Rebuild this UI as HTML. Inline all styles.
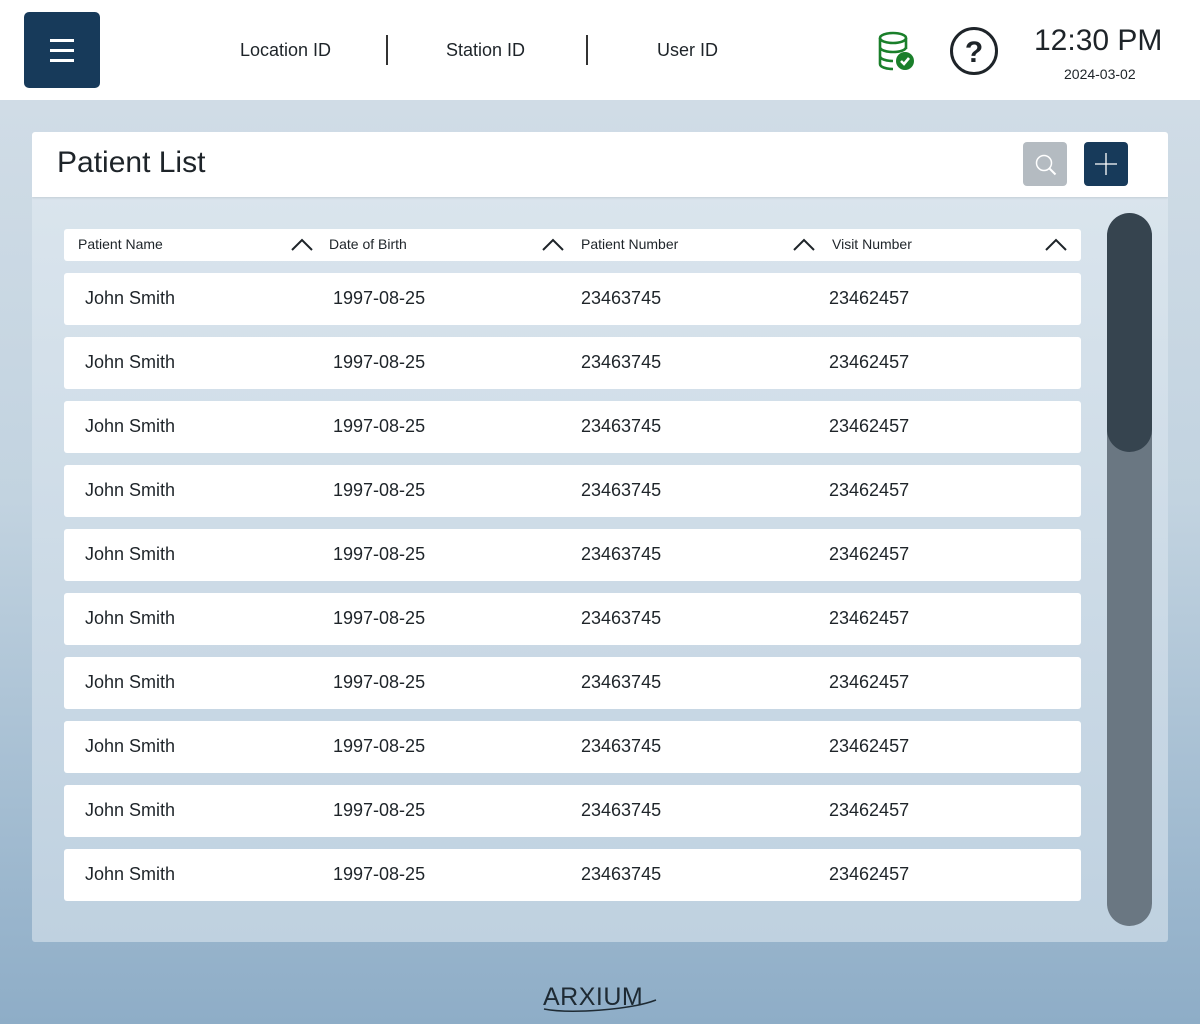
<!DOCTYPE html>
<html><head><style>
*{margin:0;padding:0;box-sizing:border-box}
body{width:1200px;height:1024px;overflow:hidden;font-family:"Liberation Sans",sans-serif;color:#1e2429;background:linear-gradient(#d0dce6 100px,#c2d3e0 500px,#8eadc7 1024px);position:relative}
.top{position:absolute;left:0;top:0;width:1200px;height:100px;background:#fff}
.menu{position:absolute;left:24px;top:12px;width:76px;height:76px;background:#173a5a;border-radius:5px}
.menu i{position:absolute;left:26px;width:24px;height:2.5px;background:#fff}
.t{position:absolute;font-size:18px}
.sep{position:absolute;top:35px;width:2px;height:30px;background:#333}
.card{position:absolute;left:32px;top:132px;width:1136px;height:810px;background:linear-gradient(#dce6ee,#bfd1e0);border-radius:3px;overflow:hidden}
.ch{position:absolute;left:0;top:0;width:1136px;height:65px;background:#fff;box-shadow:0 1px 2px rgba(0,0,0,.1)}
.row{position:absolute;left:32px;width:1017px;height:52px;background:#fff;border-radius:3px;font-size:18px}
.row span{position:absolute;top:15px}
.hd{position:absolute;left:32px;top:97px;width:1017px;height:32px;background:#fff;border-radius:3px;font-size:14px}
.hd span{position:absolute;top:7px}
.hd svg{position:absolute;top:9px}
</style></head><body>
<div class="top">
<div class="menu"><i style="top:27px"></i><i style="top:37px"></i><i style="top:47px"></i></div>
<div class="t" style="left:240px;top:40px">Location ID</div>
<div class="sep" style="left:386px"></div>
<div class="t" style="left:446px;top:40px">Station ID</div>
<div class="sep" style="left:586px"></div>
<div class="t" style="left:657px;top:40px">User ID</div>
<svg style="position:absolute;left:876px;top:31px" width="42" height="42" viewBox="0 0 42 42" fill="none" stroke="#1a7f2a" stroke-width="2.6"><ellipse cx="17" cy="7" rx="13" ry="5"/><path d="M4 7v26c0 3 6 5 13 5M30 7v11M4 16c0 3 6 5 13 5s13-2 13-5M4 25c0 3 6 5 13 5"/><circle cx="29" cy="30" r="9" fill="#1a7f2a" stroke="none"/><path d="M25 30l3 3 5-6" stroke="#fff" stroke-width="2.6"/></svg>
<svg style="position:absolute;left:949px;top:26px" width="50" height="50" viewBox="0 0 50 50"><circle cx="25" cy="25" r="22.5" fill="none" stroke="#1e2429" stroke-width="3"/><text x="25" y="36" text-anchor="middle" font-family="Liberation Sans" font-weight="bold" font-size="30" fill="#1e2429">?</text></svg>
<div class="t" style="left:1034px;top:24px;font-size:30px">12:30 PM</div>
<div class="t" style="left:1064px;top:66px;font-size:14px">2024-03-02</div>
</div>
<div class="card">
<div class="ch">
<div style="position:absolute;left:25px;top:14px;font-size:30px">Patient List</div>
<div style="position:absolute;left:991px;top:10px;width:44px;height:44px;background:#b4bbc1;border-radius:4px"><svg width="44" height="44"><circle cx="21" cy="21" r="7.5" fill="none" stroke="#fff" stroke-width="1.5"/><path d="M26.5 26.5l6 6" stroke="#fff" stroke-width="2"/></svg></div>
<div style="position:absolute;left:1052px;top:10px;width:44px;height:44px;background:#173a5a;border-radius:4px"><svg width="44" height="44"><path d="M22 11v22M11 22h22" stroke="#fff" stroke-width="1.3"/></svg></div>
</div>
<div class="hd">
<span style="left:14px">Patient Name</span><svg style="left:227px" width="22" height="14"><path d="M1 12L11 2l10 10" fill="none" stroke="#1e2429" stroke-width="2"/></svg>
<span style="left:265px">Date of Birth</span><svg style="left:478px" width="22" height="14"><path d="M1 12L11 2l10 10" fill="none" stroke="#1e2429" stroke-width="2"/></svg>
<span style="left:517px">Patient Number</span><svg style="left:729px" width="22" height="14"><path d="M1 12L11 2l10 10" fill="none" stroke="#1e2429" stroke-width="2"/></svg>
<span style="left:768px">Visit Number</span><svg style="left:981px" width="22" height="14"><path d="M1 12L11 2l10 10" fill="none" stroke="#1e2429" stroke-width="2"/></svg>
</div>
<div class="row" style="top:141px"><span style="left:21px">John Smith</span><span style="left:269px">1997-08-25</span><span style="left:517px">23463745</span><span style="left:765px">23462457</span></div>
<div class="row" style="top:205px"><span style="left:21px">John Smith</span><span style="left:269px">1997-08-25</span><span style="left:517px">23463745</span><span style="left:765px">23462457</span></div>
<div class="row" style="top:269px"><span style="left:21px">John Smith</span><span style="left:269px">1997-08-25</span><span style="left:517px">23463745</span><span style="left:765px">23462457</span></div>
<div class="row" style="top:333px"><span style="left:21px">John Smith</span><span style="left:269px">1997-08-25</span><span style="left:517px">23463745</span><span style="left:765px">23462457</span></div>
<div class="row" style="top:397px"><span style="left:21px">John Smith</span><span style="left:269px">1997-08-25</span><span style="left:517px">23463745</span><span style="left:765px">23462457</span></div>
<div class="row" style="top:461px"><span style="left:21px">John Smith</span><span style="left:269px">1997-08-25</span><span style="left:517px">23463745</span><span style="left:765px">23462457</span></div>
<div class="row" style="top:525px"><span style="left:21px">John Smith</span><span style="left:269px">1997-08-25</span><span style="left:517px">23463745</span><span style="left:765px">23462457</span></div>
<div class="row" style="top:589px"><span style="left:21px">John Smith</span><span style="left:269px">1997-08-25</span><span style="left:517px">23463745</span><span style="left:765px">23462457</span></div>
<div class="row" style="top:653px"><span style="left:21px">John Smith</span><span style="left:269px">1997-08-25</span><span style="left:517px">23463745</span><span style="left:765px">23462457</span></div>
<div class="row" style="top:717px"><span style="left:21px">John Smith</span><span style="left:269px">1997-08-25</span><span style="left:517px">23463745</span><span style="left:765px">23462457</span></div>
<div style="position:absolute;left:1075px;top:81px;width:45px;height:713px;background:#6a7782;border-radius:23px;overflow:hidden"><div style="height:239px;background:#36444f;border-radius:23px"></div></div>
</div>
<div style="position:absolute;left:543px;top:983px;font-size:25px;color:#1e2a33;letter-spacing:0.5px">ARXIUM</div>
<svg style="position:absolute;left:540px;top:998px" width="120" height="16"><path d="M4 11C30 16 90 12 116 2" fill="none" stroke="#1e2a33" stroke-width="1.5"/></svg>
</body></html>
